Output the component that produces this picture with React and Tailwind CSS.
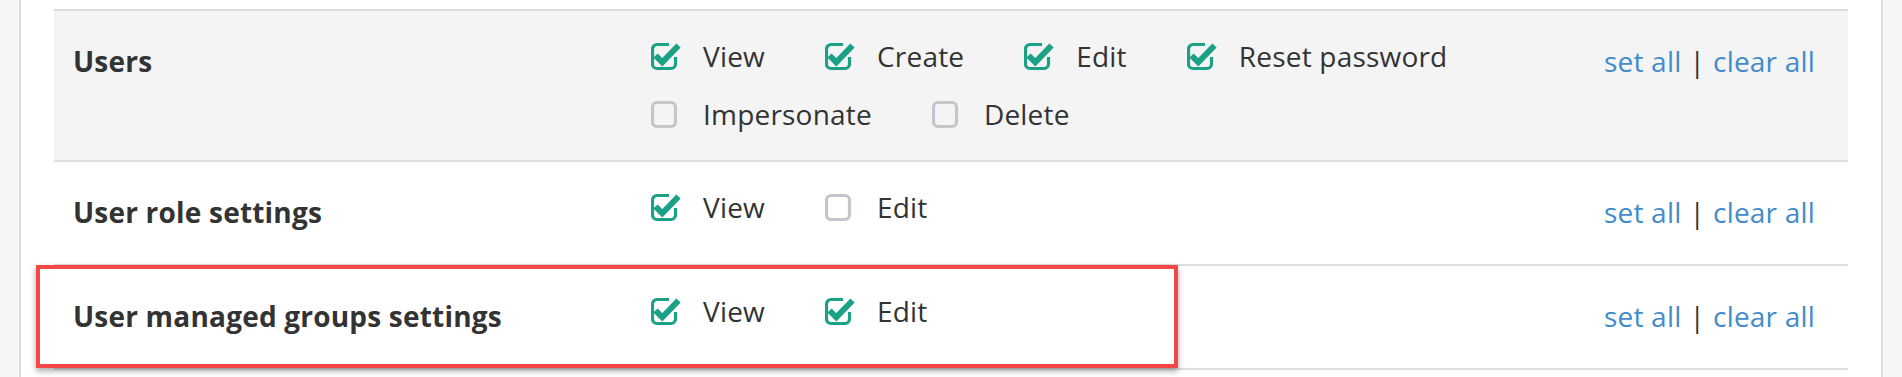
import React from "react";

const groups = [
  {
    name: "Users",
    shaded: true,
    perms: [
      ["View", true],
      ["Create", true],
      ["Edit", true],
      ["Reset password", true],
      ["Impersonate", false],
      ["Delete", false],
    ],
  },
  { name: "User role settings", perms: [["View", true], ["Edit", false]] },
  { name: "User managed groups settings", perms: [["View", true], ["Edit", true]] },
];

function CheckIcon({ checked }) {
  if (!checked) {
    return (
      <svg width="30" height="29" viewBox="0 0 30 29" className="shrink-0">
        <rect x="1.5" y="2.5" width="23" height="24" rx="4.5" fill="none" stroke="#c3c7cb" strokeWidth="3.2" />
      </svg>
    );
  }
  return (
    <svg width="30" height="29" viewBox="0 0 30 29" className="shrink-0">
      <path
        d="M18 2.5H6a4.5 4.5 0 0 0-4.5 4.5v15a4.5 4.5 0 0 0 4.5 4.5h14a4.5 4.5 0 0 0 4.5-4.5V15"
        fill="none"
        stroke="#1ba185"
        strokeWidth="3.2"
      />
      <path d="M4.5 13.5l6.8 6.8L27.5 3.5" fill="none" stroke="#1ba185" strokeWidth="6" strokeLinejoin="miter" />
    </svg>
  );
}

function Row({ group }) {
  return (
    <div
      className={
        "flex border-b-2 border-[#dedede] " + (group.shaded ? "bg-[#f4f4f4]" : "bg-white")
      }
    >
      <div className="w-[597px] shrink-0 pl-[19px] pt-[30px] pb-[32px] font-bold leading-[40px]">
        {group.name}
      </div>
      <div className="flex-1 flex flex-wrap content-start gap-x-[60px] gap-y-[18px] pt-[25px] pb-[26px]">
        {group.perms.map(([label, on]) => (
          <label key={label} className="flex items-center leading-[40px]">
            <CheckIcon checked={on} />
            <span className="ml-[22px]">{label}</span>
          </label>
        ))}
      </div>
      <div className="pr-[33px] pt-[30px] leading-[40px] whitespace-nowrap">
        <a className="text-[#428bca]">set all</a>
        <span className="mx-[8px]">|</span>
        <a className="text-[#428bca]">clear all</a>
      </div>
    </div>
  );
}

export default function App() {
  return (
    <div
      className="relative h-[377px] w-full overflow-hidden bg-[#f6f6f8] px-[19px] text-[28px] tracking-[0.2px] text-[#333333]"
      style={{ fontFamily: '"Open Sans", "Liberation Sans", sans-serif' }}
    >
      <div className="h-full border-x-2 border-[#dddddd] bg-white px-[33px] pt-[9px]">
        <div className="border-t-2 border-[#dcdcdc]">
          {groups.map((g) => (
            <Row key={g.name} group={g} />
          ))}
        </div>
      </div>

      {/* highlight around the new row */}
      <div className="absolute left-[36px] top-[265px] h-[103px] w-[1142px] border-4 border-[#f44848] shadow-[0_3px_6px_rgba(0,0,0,0.35)]" />
    </div>
  );
}
